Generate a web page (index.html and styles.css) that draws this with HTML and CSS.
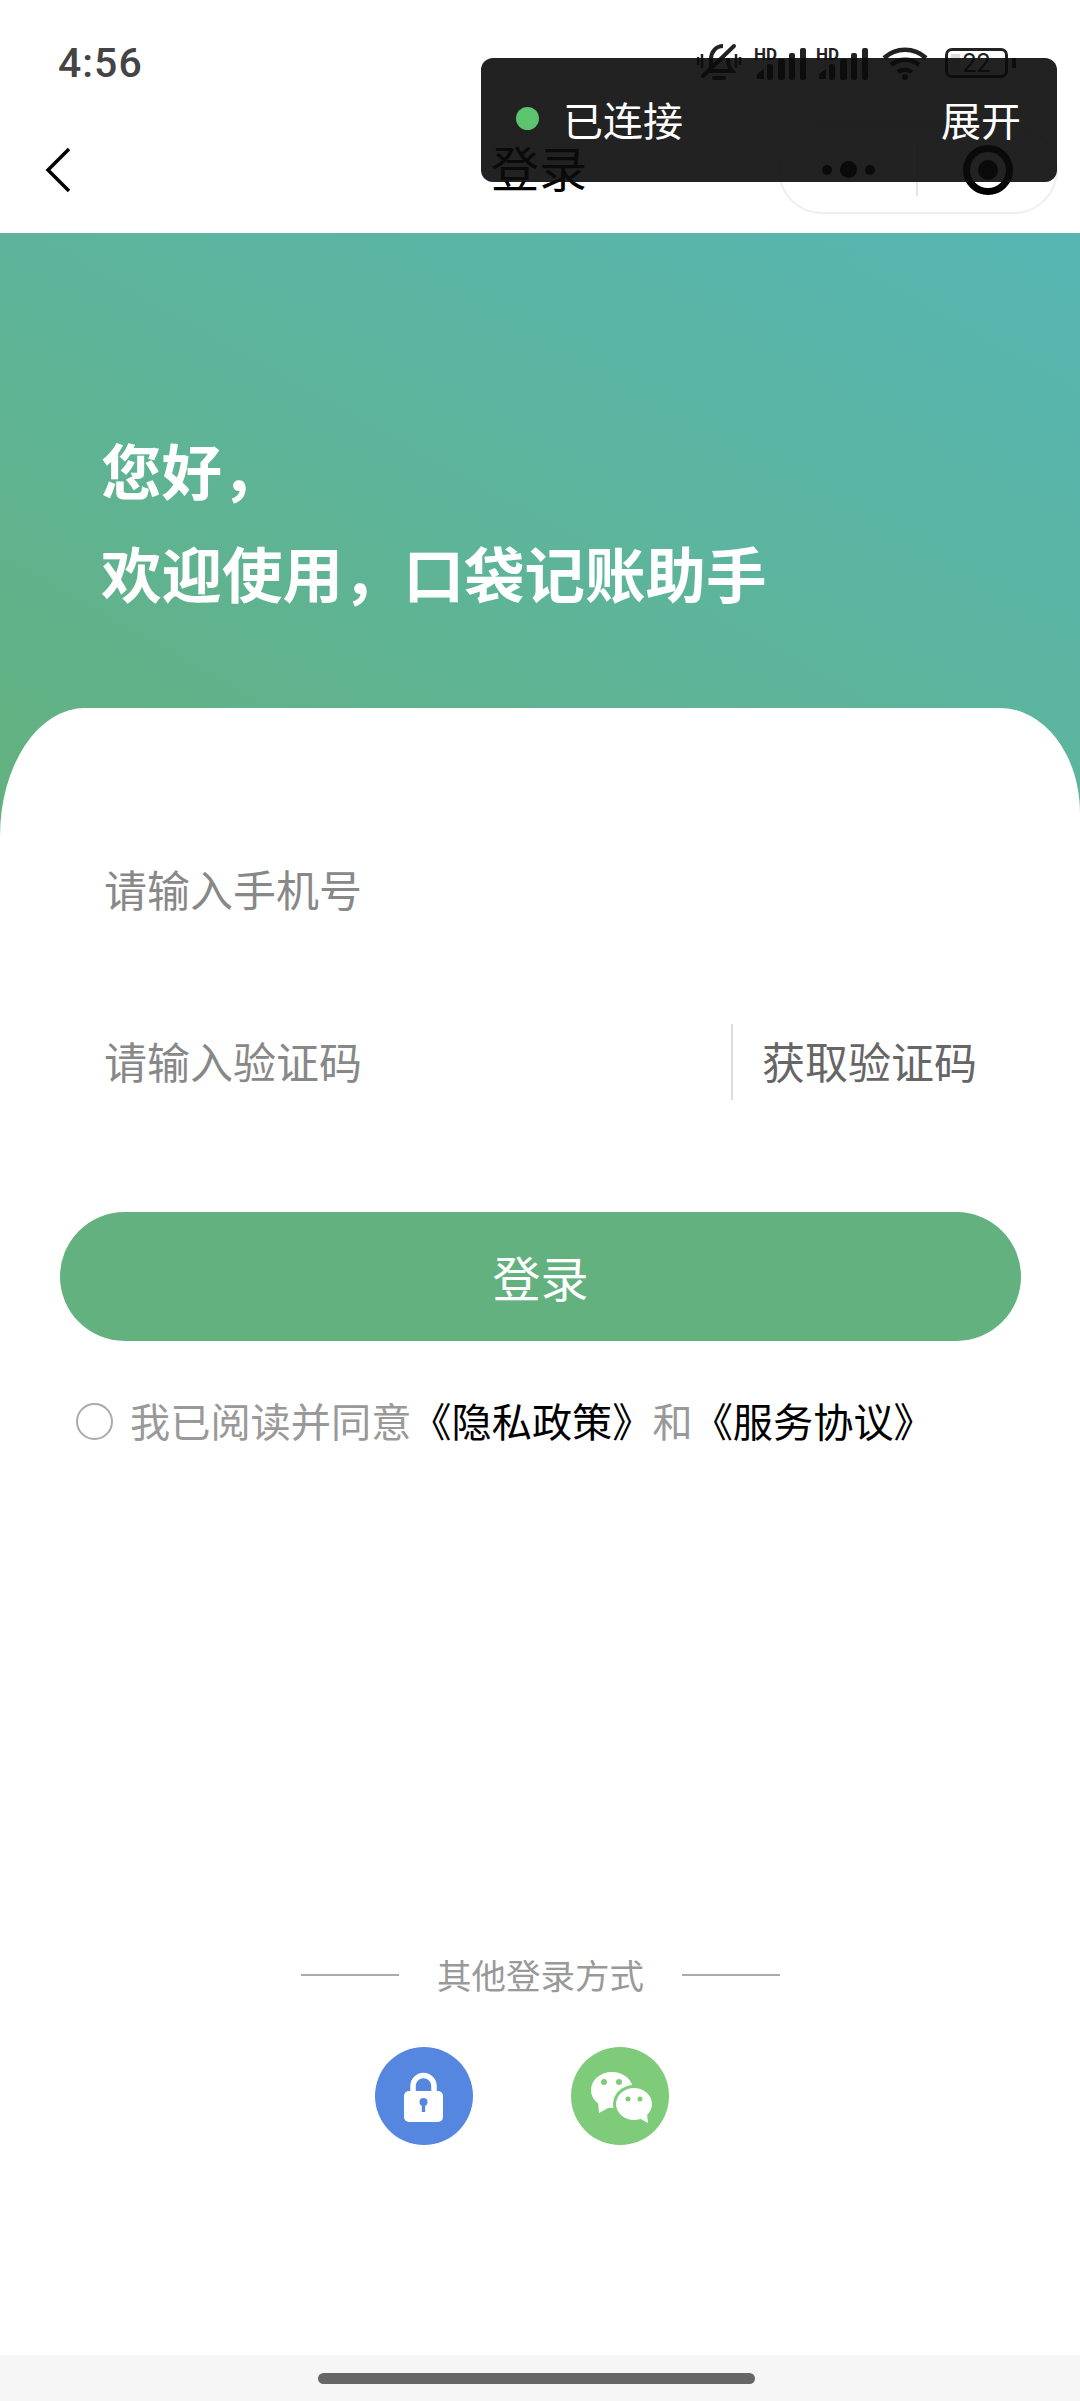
FILE: index.html
```html
<!DOCTYPE html>
<html lang="zh-CN">
<head>
    <meta charset="UTF-8">
    <meta name="viewport" content="width=device-width, initial-scale=1.0">
    <title>登录</title>
    <link rel="stylesheet" href="styles.css">
</head>
<body>
    <div class="page">
        <!-- 状态栏 -->
        <div class="status-bar">
            <span class="time">4:56</span>
            <div class="status-icons">
                <svg class="icon-bell" width="45" height="40" viewBox="0 0 45 40" fill="none" stroke="#222" stroke-width="4">
                    <path d="M13 28c1-3 1-7 1-12 0-7 5-13 12-13"/>
                    <path d="M31 15c0 6 1 10 4 13H11"/>
                    <path d="M17 35h10" stroke-linecap="round"/>
                    <path d="M37 3 6 33" stroke-linecap="round"/>
                    <path d="M1 14v8M5 11v14M39 11v14M43 14v8" stroke-width="2.500"/>
                </svg>
                <div class="signal">
                    <span class="hd">HD</span>
                    <svg width="49" height="32" viewBox="0 0 49 32" fill="#222">
                        <path d="M0 31v-5l7-5v10z"/>
                        <rect x="10" y="16" width="6" height="16" rx="2"/>
                        <rect x="21" y="11" width="7" height="21" rx="2"/>
                        <rect x="32" y="5" width="6" height="27" rx="2"/>
                        <rect x="43" y="0" width="6" height="32" rx="2"/>
                    </svg>
                </div>
                <div class="signal">
                    <span class="hd">HD</span>
                    <svg width="49" height="32" viewBox="0 0 49 32" fill="#222">
                        <path d="M0 31v-5l7-5v10z"/>
                        <rect x="10" y="16" width="6" height="16" rx="2"/>
                        <rect x="21" y="11" width="7" height="21" rx="2"/>
                        <rect x="32" y="5" width="6" height="27" rx="2"/>
                        <rect x="43" y="0" width="6" height="32" rx="2"/>
                    </svg>
                </div>
                <svg class="icon-wifi" width="46" height="34" viewBox="0 0 46 34" fill="none" stroke="#222" stroke-width="4.500">
                    <path d="M2 12c12-11 30-11 42 0"/>
                    <path d="M9 19c8-7 20-7 28 0"/>
                    <path d="M16 26c4-3 10-3 14 0"/>
                    <circle cx="23" cy="31" r="3" fill="#222" stroke="none"/>
                </svg>
                <div class="battery">
                    <span class="battery-level"></span>
                    <span class="battery-text">22</span>
                </div>
                <span class="battery-nub"></span>
            </div>
        </div>

        <!-- 导航栏 -->
        <div class="nav-bar">
            <svg class="back" width="28" height="46" viewBox="0 0 28 46" fill="none" stroke="#000" stroke-width="3.500">
                <path d="M25 2 4 23l21 21"/>
            </svg>
            <div class="nav-title">登录</div>
            <div class="capsule">
                <div class="capsule-dots">
                    <span class="dot"></span>
                    <span class="dot dot-big"></span>
                    <span class="dot"></span>
                </div>
                <span class="capsule-line"></span>
                <div class="capsule-target"><span></span></div>
            </div>
        </div>

        <div class="hero">
            <p>您好，</p>
            <p>欢迎使用，口袋记账助手</p>
        </div>

        <div class="card">
            <div class="field"><span class="field-text">请输入手机号</span></div>
            <div class="field field-code">
                <span class="field-text">请输入验证码</span>
                <span class="get-code">获取验证码</span>
            </div>
            <div class="login-btn">登录</div>
            <div class="agree">
                <span class="radio"></span>
                <span class="agree-text">我已阅读并同意<b>《隐私政策》</b>和<b>《服务协议》</b></span>
            </div>

            <div class="other">
                <div class="other-title">
                    <span class="other-line"></span>
                    <span class="other-text">其他登录方式</span>
                    <span class="other-line"></span>
                </div>
                <div class="other-icons">
                    <svg width="98" height="98" viewBox="0 0 98 98">
                        <circle cx="49" cy="49" r="49" fill="#5587e0"/>
                        <path d="M38 46V39a10.500 10.500 0 0 1 21 0v7" fill="none" stroke="#fff" stroke-width="5.500"/>
                        <rect x="29" y="44" width="39" height="31" rx="5" fill="#fff"/>
                        <circle cx="48.500" cy="55" r="4" fill="#5587e0"/>
                        <rect x="46.800" y="55" width="3.400" height="10" fill="#5587e0"/>
                    </svg>
                    <svg width="98" height="98" viewBox="0 0 98 98">
                        <circle cx="49" cy="49" r="49" fill="#7ecb79"/>
                        <ellipse cx="41" cy="43" rx="21" ry="18" fill="#fff"/>
                        <path d="M27 54l1 12 11-6z" fill="#fff"/>
                        <circle cx="33" cy="35" r="3" fill="#7ecb79"/>
                        <circle cx="48" cy="35" r="3" fill="#7ecb79"/>
                        <ellipse cx="63" cy="57" rx="21" ry="19" fill="#7ecb79"/>
                        <ellipse cx="63" cy="57" rx="18" ry="16" fill="#fff"/>
                        <path d="M68 71l9 5-1-9z" fill="#fff"/>
                        <circle cx="57" cy="52" r="2.500" fill="#7ecb79"/>
                        <circle cx="69" cy="52" r="2.500" fill="#7ecb79"/>
                    </svg>
                </div>
            </div>
        </div>

        <div class="home-bar"><span></span></div>

        <!-- 连接提示，盖在顶部之上 -->
        <div class="toast">
            <span class="toast-dot"></span>
            <span class="toast-text">已连接</span>
            <span class="toast-open">展开</span>
        </div>
    </div>
</body>

</html>
```

FILE: styles.css
```css
* {
    box-sizing: border-box;
}
body {
    margin: 0;
    padding: 0;
    background-color: #fff;
    font-family: "Noto Sans CJK SC", "Noto Sans", sans-serif;
}
.page {
    position: relative;
    width: 1080px;
    height: 2401px;
    display: flex;
    flex-direction: column;
    overflow: hidden;
}
.status-bar {
    height: 106px;
    padding: 38px 64px 0 58px;
    display: flex;
    justify-content: space-between;
    align-items: flex-start;
}
.time {
    font-family: Roboto, sans-serif;
    font-size: 41px;
    font-weight: 500;
    line-height: 50px;
    letter-spacing: 1px;
    color: #444;
}
.status-icons {
    height: 50px;
    display: flex;
    align-items: center;
    color: #222;
}
.icon-bell {
    margin-right: 15px;
}
.signal {
    position: relative;
    width: 49px;
    height: 32px;
    margin-top: 2px;
    margin-right: 13px;
}
.signal svg {
    display: block;
}
.hd {
    position: absolute;
    left: -3px;
    top: -3px;
    font-family: Roboto, sans-serif;
    font-size: 17px;
    font-weight: 700;
    line-height: 18px;
}
.icon-wifi {
    margin-left: 1px;
}
.battery {
    position: relative;
    width: 63px;
    height: 30px;
    margin-left: 17px;
    border: 3px solid #222;
    border-radius: 7px;
    display: flex;
    align-items: center;
    justify-content: center;
}
.battery-level {
    position: absolute;
    left: 3px;
    top: 3px;
    bottom: 3px;
    width: 9px;
    background-color: #ddd;
}
.battery-text {
    position: relative;
    font-family: Roboto, sans-serif;
    font-size: 25px;
    line-height: 25px;
}
.battery-nub {
    width: 4px;
    height: 10px;
    margin-left: 4px;
    background-color: #222;
}
.nav-bar {
    height: 127px;
    padding: 0 22px 0 20px;
    display: grid;
    grid-template-columns: minmax(0, 1fr) auto minmax(0, 1fr);
    align-items: center;
}
.back {
    justify-self: start;
    margin-left: 24px;
}
.nav-title {
    margin-bottom: 7px;
    font-size: 48px;
    line-height: 60px;
    color: #000;
}
.capsule {
    justify-self: end;
    width: 280px;
    height: 88px;
    border: 2px solid #eee;
    border-radius: 44px;
    display: flex;
    align-items: center;
}
.capsule-dots {
    width: 136px;
    display: flex;
    justify-content: center;
    align-items: center;
    gap: 8px;
}
.dot {
    width: 10px;
    height: 10px;
    border-radius: 50%;
    background-color: #000;
}
.dot-big {
    width: 17px;
    height: 17px;
}
.capsule-line {
    width: 2px;
    height: 52px;
    background-color: #e5e5e5;
}
.capsule-target {
    width: 50px;
    height: 50px;
    margin-left: 45px;
    border: 7px solid #000;
    border-radius: 50%;
    display: flex;
    align-items: center;
    justify-content: center;
}
.capsule-target span {
    width: 20px;
    height: 20px;
    border-radius: 50%;
    background-color: #000;
}
.hero {
    height: 607px;
    padding: 184px 0 0 101px;
    background: linear-gradient(to top right, #63b17e 0%, #5cb5a0 60%, #57b6b3 100%);
    color: #fff;
    font-size: 60.500px;
    font-weight: 700;
    line-height: 103px;
}
.hero p {
    margin: 0;
}
.card {
    flex: 1;
    margin-top: -132px;
    padding: 144px 59px 0 60px;
    background-color: #fff;
    border-radius: 85px 80px 0 0 / 128px 105px 0 0;
    display: flex;
    flex-direction: column;
}
.field {
    height: 76px;
    margin-bottom: 96px;
    padding-left: 44px;
    font-size: 43px;
    line-height: 60px;
    color: #888;
    display: flex;
    align-items: center;
}
.field-text {
    margin-bottom: 5px;
}
.field-code {
    margin-bottom: 0;
    justify-content: space-between;
}
.get-code {
    width: 290px;
    height: 76px;
    padding: 0 0 5px 29px;
    border-left: 2px solid #ddd;
    color: #666;
    white-space: nowrap;
    display: flex;
    align-items: center;
}
.login-btn {
    height: 129px;
    margin-top: 112px;
    border-radius: 65px;
    background-color: #63b17e;
    color: #fff;
    font-size: 48px;
    line-height: 129px;
    text-align: center;
}
.agree {
    height: 40px;
    margin-top: 60px;
    padding-left: 16px;
    display: flex;
    align-items: center;
    font-size: 40.200px;
    line-height: 40px;
    color: #999;
}
.agree-text {
    margin-bottom: 2px;
    white-space: nowrap;
}
.agree b {
    font-weight: 400;
    color: #000;
}
.radio {
    width: 37px;
    height: 37px;
    margin-right: 17px;
    border: 2px solid #aaa;
    border-radius: 50%;
}
.other {
    margin-top: auto;
    padding-bottom: 210px;
}
.other-title {
    height: 50px;
    display: flex;
    justify-content: center;
    align-items: center;
    gap: 38px;
    font-size: 34.500px;
    color: #999;
}
.other-text {
    margin-bottom: 3px;
}
.other-line {
    width: 98px;
    height: 2px;
    background-color: #aaa;
}
.other-icons {
    margin-top: 47px;
    padding-right: 38px;
    display: flex;
    justify-content: center;
    gap: 98px;
}
.home-bar {
    height: 46px;
    padding-top: 18px;
    background-color: #f6f6f6;
}
.home-bar span {
    display: block;
    width: 437px;
    height: 11px;
    margin-left: 318px;
    border-radius: 6px;
    background-color: #666;
}
.toast {
    position: absolute;
    left: 481px;
    top: 58px;
    width: 576px;
    height: 124px;
    padding: 0 36px 3px 35px;
    border-radius: 12px;
    background-color: rgba(11, 11, 11, 0.906);
    display: flex;
    align-items: center;
    color: #fff;
    font-size: 40px;
}
.toast-dot {
    width: 23px;
    height: 23px;
    margin-right: 24px;
    border-radius: 50%;
    background-color: #5cc46f;
}
.toast-open {
    margin-left: auto;
}
```
